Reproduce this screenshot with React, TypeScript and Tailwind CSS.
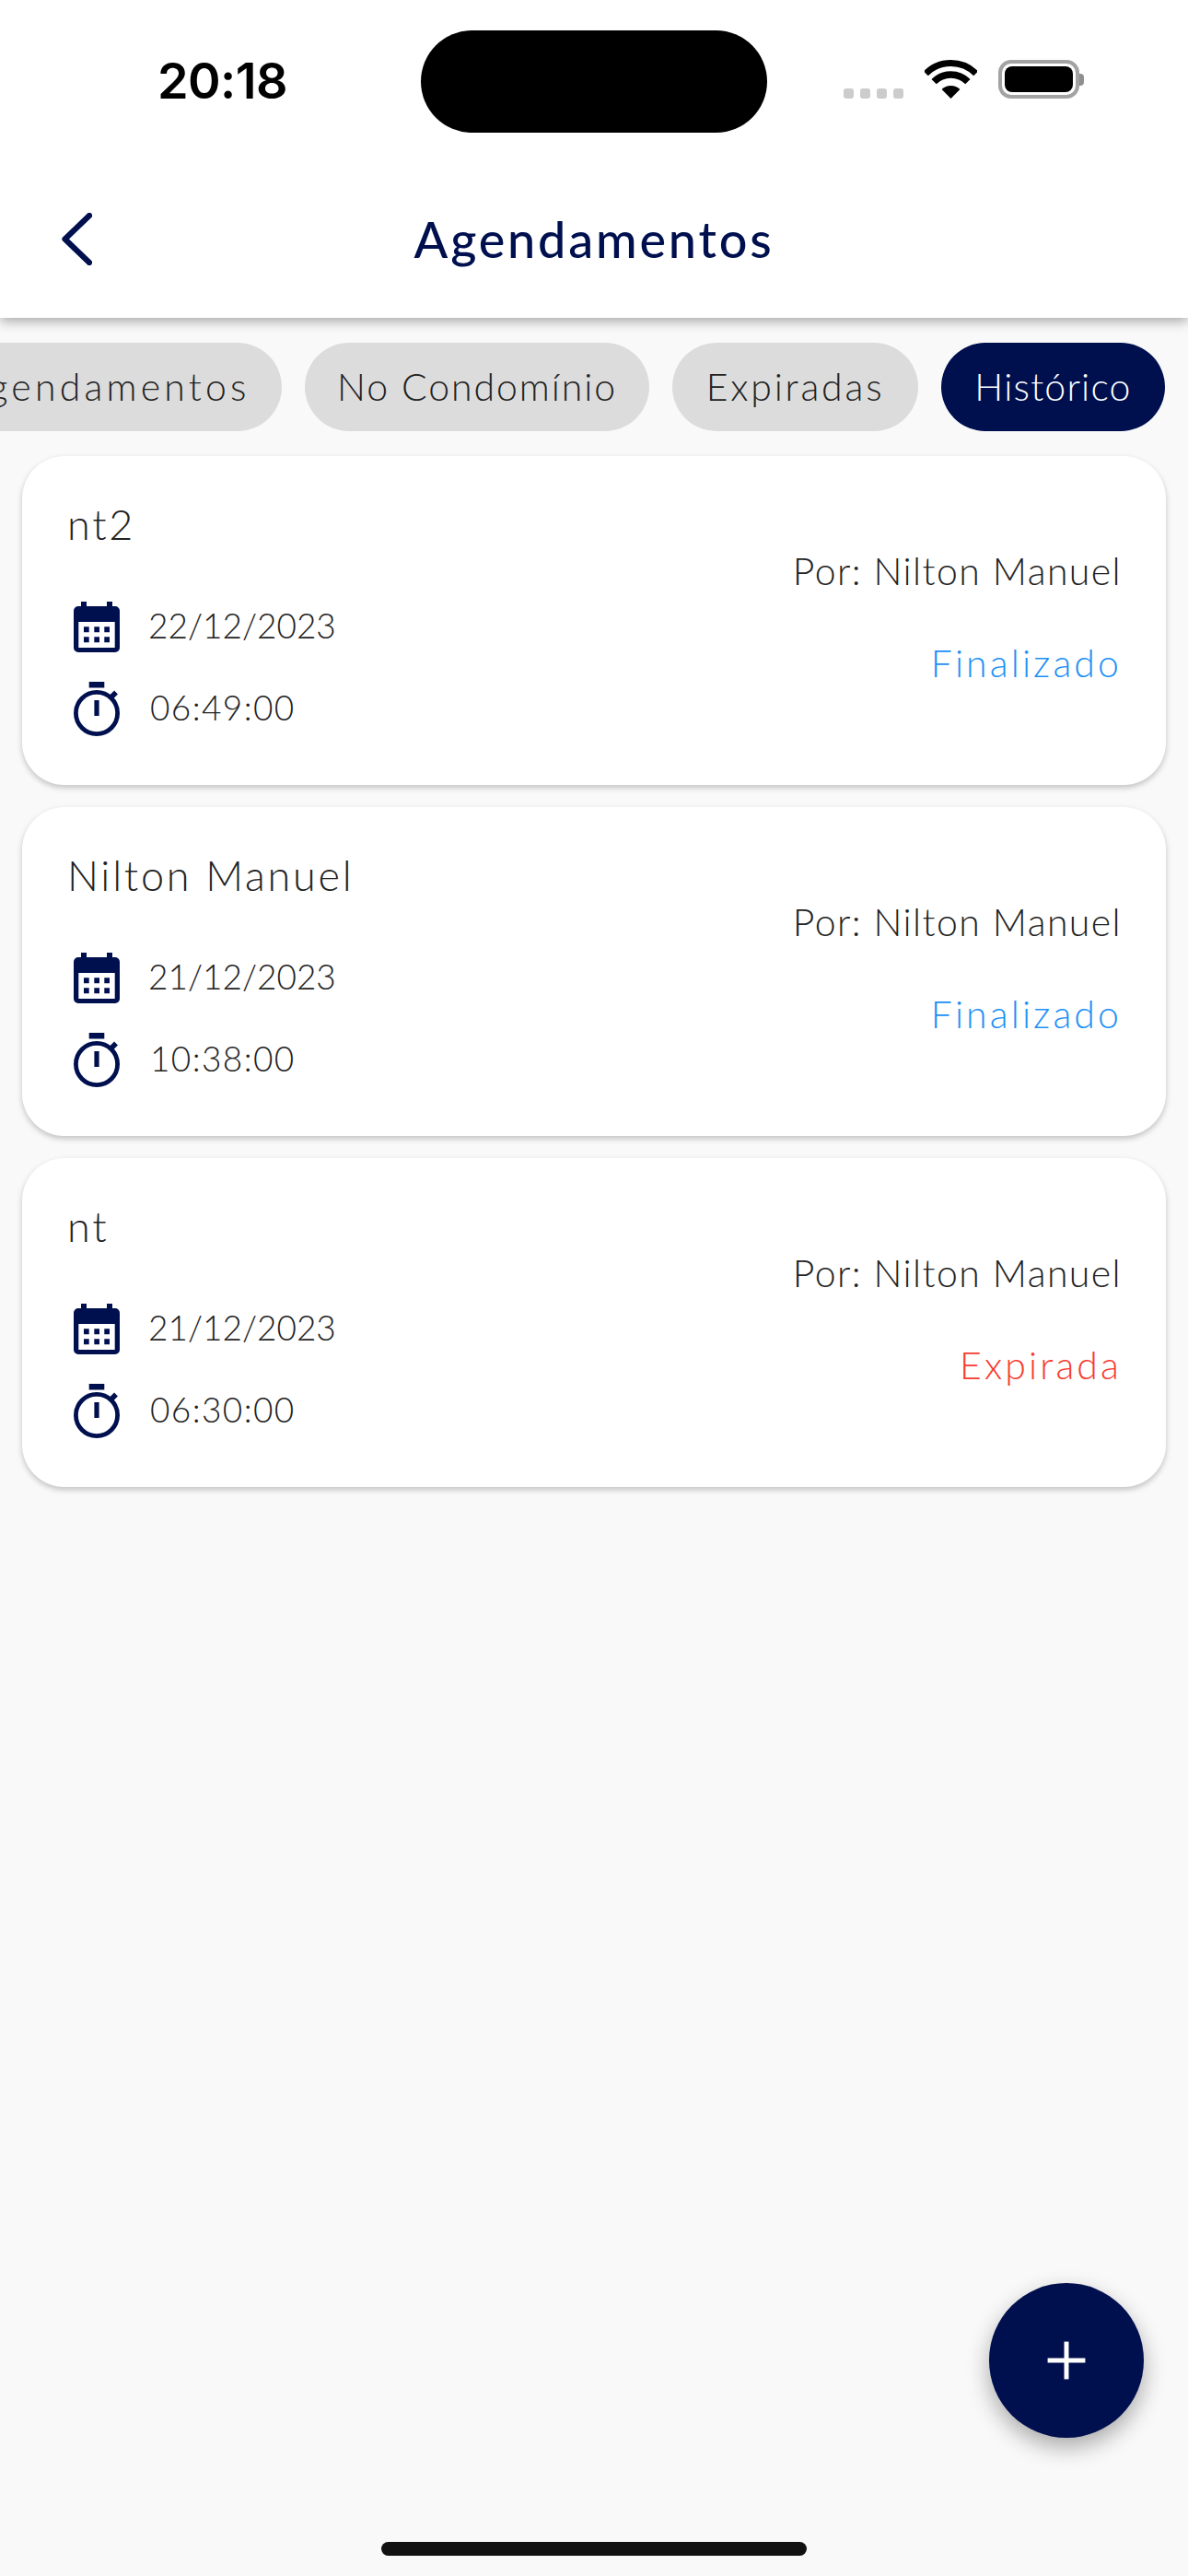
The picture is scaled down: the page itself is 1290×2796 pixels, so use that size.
import { Plus } from "lucide-react";

const navy = "#00104f";

function CalendarIcon() {
  return (
    <svg viewBox="0 0 50 55" className="h-[55px] w-[50px] shrink-0">
      <rect x="8" y="0" width="6" height="10" fill={navy} />
      <rect x="36" y="0" width="6" height="10" fill={navy} />
      <path
        fill={navy}
        fillRule="evenodd"
        d="M5 5h40a5 5 0 0 1 5 5v40a5 5 0 0 1-5 5H5a5 5 0 0 1-5-5V10a5 5 0 0 1 5-5ZM5.3 22v28h39.4V22Z"
      />
      <path
        fill={navy}
        d="M11 27.3h5.7v6H11ZM22.3 27.3h5.7v6h-5.7ZM33.3 27.3h5.7v6h-5.7ZM11 38.3h5.7v6H11ZM22.3 38.3h5.7v6h-5.7ZM33.3 38.3h5.7v6h-5.7Z"
      />
    </svg>
  );
}

function StopwatchIcon() {
  return (
    <svg viewBox="0 0 50 59" className="h-[59px] w-[50px] shrink-0">
      <rect x="16.7" y="0" width="16.6" height="6.5" fill={navy} />
      <circle cx="25" cy="34" r="22.6" fill="none" stroke={navy} strokeWidth="4.8" />
      <rect x="22.4" y="20" width="5.2" height="17" fill={navy} />
      <path d="M40 17.5 46 11.5" stroke={navy} strokeWidth="5.4" />
    </svg>
  );
}

function WifiIcon() {
  return (
    <svg viewBox="0 0 57 42" className="h-[42px] w-[57px]">
      <path d="M1.3 14.8A38.5 38.5 0 0 1 55.7 14.8" fill="none" stroke="#000" strokeWidth="7" />
      <path d="M10.1 23.6A26 26 0 0 1 46.9 23.6" fill="none" stroke="#000" strokeWidth="7.5" />
      <path d="M28.5 42 18.6 32.1A14 14 0 0 1 38.4 32.1Z" fill="#000" />
    </svg>
  );
}

function BackIcon() {
  return (
    <svg viewBox="0 0 33 57" className="h-[57px] w-[33px]">
      <path
        d="M30 3 3.5 28.5 30 54"
        fill="none"
        stroke={navy}
        strokeWidth="6.2"
        strokeLinecap="round"
        strokeLinejoin="round"
      />
    </svg>
  );
}

function Chip({ label, size, active }: { label: string; size: string; active?: boolean }) {
  return (
    <div
      className={
        (active ? "bg-[#00104f] text-white " : "bg-[#dcdcdc] text-[#222222] ") +
        size +
        " flex h-[96px] shrink-0 items-center justify-center rounded-full text-[41px] font-light"
      }
    >
      {label}
    </div>
  );
}

type Booking = {
  name: string;
  date: string;
  time: string;
  status: string;
  expired?: boolean;
};

const bookings: Booking[] = [
  { name: "nt2", date: "22/12/2023", time: "06:49:00", status: "Finalizado" },
  { name: "Nilton Manuel", date: "21/12/2023", time: "10:38:00", status: "Finalizado" },
  { name: "nt", date: "21/12/2023", time: "06:30:00", status: "Expirada", expired: true },
];

function BookingCard({ item }: { item: Booking }) {
  return (
    <div className="flex h-[357px] items-center justify-between rounded-[46px] bg-white pr-[48px] pl-[49px] shadow-[0_3px_6px_rgba(0,0,0,0.22)]">
      <div className="flex h-full flex-col">
        <p className="mt-[48px] text-[45px] leading-[52px] font-light tracking-[2.75px] text-[#222222]">
          {item.name}
        </p>
        <div className="mt-[58px] flex items-center gap-[31px] pl-[7px] text-[37px] font-light text-[#222222]">
          <CalendarIcon />
          <span className="pb-[4px] leading-[46px]">{item.date}</span>
        </div>
        <div className="mt-[32px] flex items-center gap-[33px] pl-[7px] text-[37px] font-light tracking-[1.4px] text-[#222222]">
          <StopwatchIcon />
          <span className="pb-[4px] leading-[46px]">{item.time}</span>
        </div>
      </div>
      <div className="mb-[7px] flex flex-col items-end gap-[54px] text-[41px] leading-[46px] font-light">
        <p className="tracking-[1.4px] text-[#222222]">Por: Nilton Manuel</p>
        <p className={item.expired ? "tracking-[3.1px] text-[#f73c30]" : "tracking-[3.1px] text-[#1e90f5]"}>
          {item.status}
        </p>
      </div>
    </div>
  );
}

export default function App() {
  return (
    <div className="relative h-[2796px] w-[1290px] overflow-hidden bg-[#f9f9f9] font-[Lato,sans-serif]">
      {/* Cabecalho */}
      <header className="relative z-10 h-[345px] bg-white shadow-[0_4px_12px_rgba(0,0,0,0.32)]">
        <div className="grid grid-cols-[457px_376px_1fr] pt-[33px]">
          <div className="pt-[25px] pl-[171px] font-[Inter,sans-serif] text-[54px] leading-[60px] font-semibold tracking-[-0.6px] text-black">
            20:18
          </div>
          <div className="h-[111px] rounded-full bg-black" />
          <div className="flex h-[74px] items-end pl-[83px]">
            <div className="flex gap-[7px]">
              <span className="h-[11px] w-[11px] rounded-[3px] bg-[#cccccc]" />
              <span className="h-[11px] w-[11px] rounded-[3px] bg-[#cccccc]" />
              <span className="h-[11px] w-[11px] rounded-[3px] bg-[#cccccc]" />
              <span className="h-[11px] w-[11px] rounded-[3px] bg-[#cccccc]" />
            </div>
            <div className="ml-[23px]">
              <WifiIcon />
            </div>
            <div className="ml-[23px] flex items-center">
              <div className="h-[42px] w-[88px] rounded-[14px] border-[4px] border-[#a3a3a3] p-[3px]">
                <div className="h-full w-full rounded-[8px] bg-black" />
              </div>
              <div className="h-[13px] w-[5px] rounded-r-[4px] bg-[#8f8f8f]" />
            </div>
          </div>
        </div>
        <div className="relative mt-[76px] text-center text-[54px] leading-[80px] font-medium tracking-[2.8px] text-[#00104f]">
          <div className="absolute top-[11px] left-[67px]">
            <BackIcon />
          </div>
          Agendamentos
        </div>
      </header>

      {/* Filtros */}
      <div className="mt-[27px] flex justify-end gap-[25px] overflow-hidden pr-[25px]">
        <Chip label="Agendamentos" size="w-[384px] tracking-[4.2px]" />
        <Chip label="No Condomínio" size="w-[374px] tracking-[1.9px]" />
        <Chip label="Expiradas" size="w-[267px] tracking-[2.8px]" />
        <Chip label="Histórico" size="w-[243px] tracking-[1.2px]" active />
      </div>

      {/* Lista */}
      <div className="mt-[27px] flex flex-col gap-[24px] px-[24px]">
        {bookings.map((item) => (
          <BookingCard key={item.name} item={item} />
        ))}
      </div>

      <button className="absolute top-[2478px] left-[1074px] flex h-[168px] w-[168px] items-center justify-center rounded-full bg-[#00104f] shadow-[0_10px_24px_rgba(0,0,0,0.32)]">
        <Plus className="h-[70px] w-[70px]" strokeWidth={1.7} strokeLinecap="butt" color="#ffffff" />
      </button>
      <div className="absolute top-[2759px] left-[414px] h-[15px] w-[462px] rounded-full bg-[#111111]" />
    </div>
  );
}
